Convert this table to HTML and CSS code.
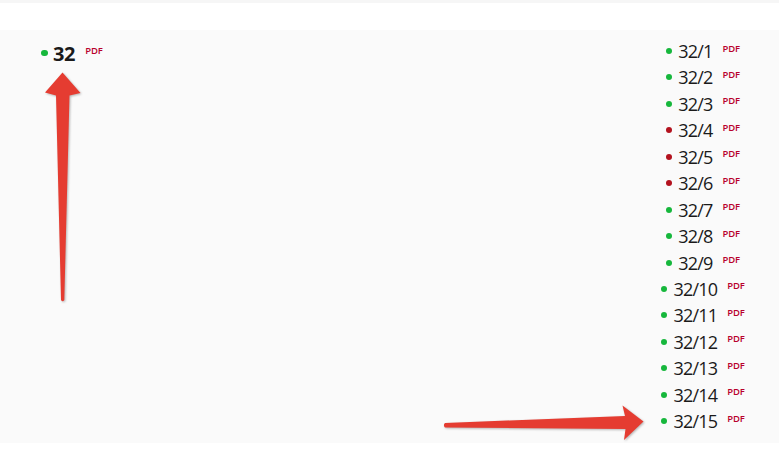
FILE: index.html
```html
<!DOCTYPE html>
<html lang="ru">
<head>
<meta charset="utf-8">
<title>32</title>
<link rel="stylesheet" href="styles.css">
</head>
<body>
<div class="topline"></div>
<div class="spacer"></div>
<div class="panel">
  <div class="col col-left">
    <div class="item main"><span class="dot green"></span><span class="num">32</span><span class="pdf">PDF</span></div>
  </div>
  <div class="col-mid"></div>
  <div class="col col-right">
    <div class="item"><span class="dot green"></span><span class="num">32/1</span><span class="pdf">PDF</span></div>
    <div class="item"><span class="dot green"></span><span class="num">32/2</span><span class="pdf">PDF</span></div>
    <div class="item"><span class="dot green"></span><span class="num">32/3</span><span class="pdf">PDF</span></div>
    <div class="item"><span class="dot red"></span><span class="num">32/4</span><span class="pdf">PDF</span></div>
    <div class="item"><span class="dot red"></span><span class="num">32/5</span><span class="pdf">PDF</span></div>
    <div class="item"><span class="dot red"></span><span class="num">32/6</span><span class="pdf">PDF</span></div>
    <div class="item"><span class="dot green"></span><span class="num">32/7</span><span class="pdf">PDF</span></div>
    <div class="item"><span class="dot green"></span><span class="num">32/8</span><span class="pdf">PDF</span></div>
    <div class="item"><span class="dot green"></span><span class="num">32/9</span><span class="pdf">PDF</span></div>
    <div class="item"><span class="dot green"></span><span class="num">32/10</span><span class="pdf">PDF</span></div>
    <div class="item"><span class="dot green"></span><span class="num">32/11</span><span class="pdf">PDF</span></div>
    <div class="item"><span class="dot green"></span><span class="num">32/12</span><span class="pdf">PDF</span></div>
    <div class="item"><span class="dot green"></span><span class="num">32/13</span><span class="pdf">PDF</span></div>
    <div class="item"><span class="dot green"></span><span class="num">32/14</span><span class="pdf">PDF</span></div>
    <div class="item"><span class="dot green"></span><span class="num">32/15</span><span class="pdf">PDF</span></div>
  </div>
</div>
<svg class="arrows" width="779" height="456" viewBox="0 0 779 456" aria-hidden="true">
  <path class="arrow" d="M62.5 72.5 L80.5 93 L69.5 95.5 L64.3 300 Q62.7 302.5 61 300 L56 95.5 L45 92.5 Z"/>
  <path class="arrow" d="M445 423 L625 416 L622.5 405.5 L643.5 421.5 L624 440 L625.5 429 L445 427.5 Q442.8 425.2 445 423 Z"/>
</svg>
</body>
</html>
```
FILE: styles.css
```css
html, body {
  margin: 0;
  padding: 0;
  background: #ffffff;
}

body {
  width: 779px;
  height: 456px;
  position: relative;
  overflow: hidden;
  font-family: "Open Sans", "Noto Sans", sans-serif;
  color: #1a1a1a;
}

.topline {
  height: 3px;
  background: #f6f6f6;
}

.spacer {
  height: 27px;
  background: #ffffff;
}

.panel {
  height: 405px;
  padding: 8px 26px 0 22px;
  background: #fafafa;
  display: grid;
  grid-template-columns: 100px 1fr 100px;
}

.col {
  display: flex;
  flex-direction: column;
  align-items: center;
}

.col-left {
  padding-top: 2.5px;
}

.item {
  display: block;
  white-space: nowrap;
  font-size: 18px;
  line-height: 26.43px;
}

.num {
  letter-spacing: -0.8px;
}

.main {
  font-size: 20px;
  font-weight: 700;
}

.main .num {
  letter-spacing: -0.2px;
}

.dot {
  display: inline-block;
  width: 6px;
  height: 6px;
  border-radius: 50%;
  margin-right: 6px;
  vertical-align: 4px;
}

.main .dot {
  width: 6.5px;
  height: 6.5px;
  margin-right: 5px;
  vertical-align: 4.5px;
}

.green {
  background: #16b73c;
}

.red {
  background: #b3121e;
}

.pdf {
  display: inline-block;
  font-size: 9.5px;
  font-weight: 600;
  line-height: 9px;
  letter-spacing: -0.2px;
  color: #b8002c;
  margin-left: 10px;
  vertical-align: 6.5px;
}

.main .pdf {
  font-weight: 600;
  vertical-align: 7px;
}

.arrows {
  position: absolute;
  left: 0;
  top: 0;
  pointer-events: none;
}

.arrow {
  fill: #e53c31;
  filter: drop-shadow(1px 1.5px 1px rgba(0, 0, 0, 0.28));
}
```
